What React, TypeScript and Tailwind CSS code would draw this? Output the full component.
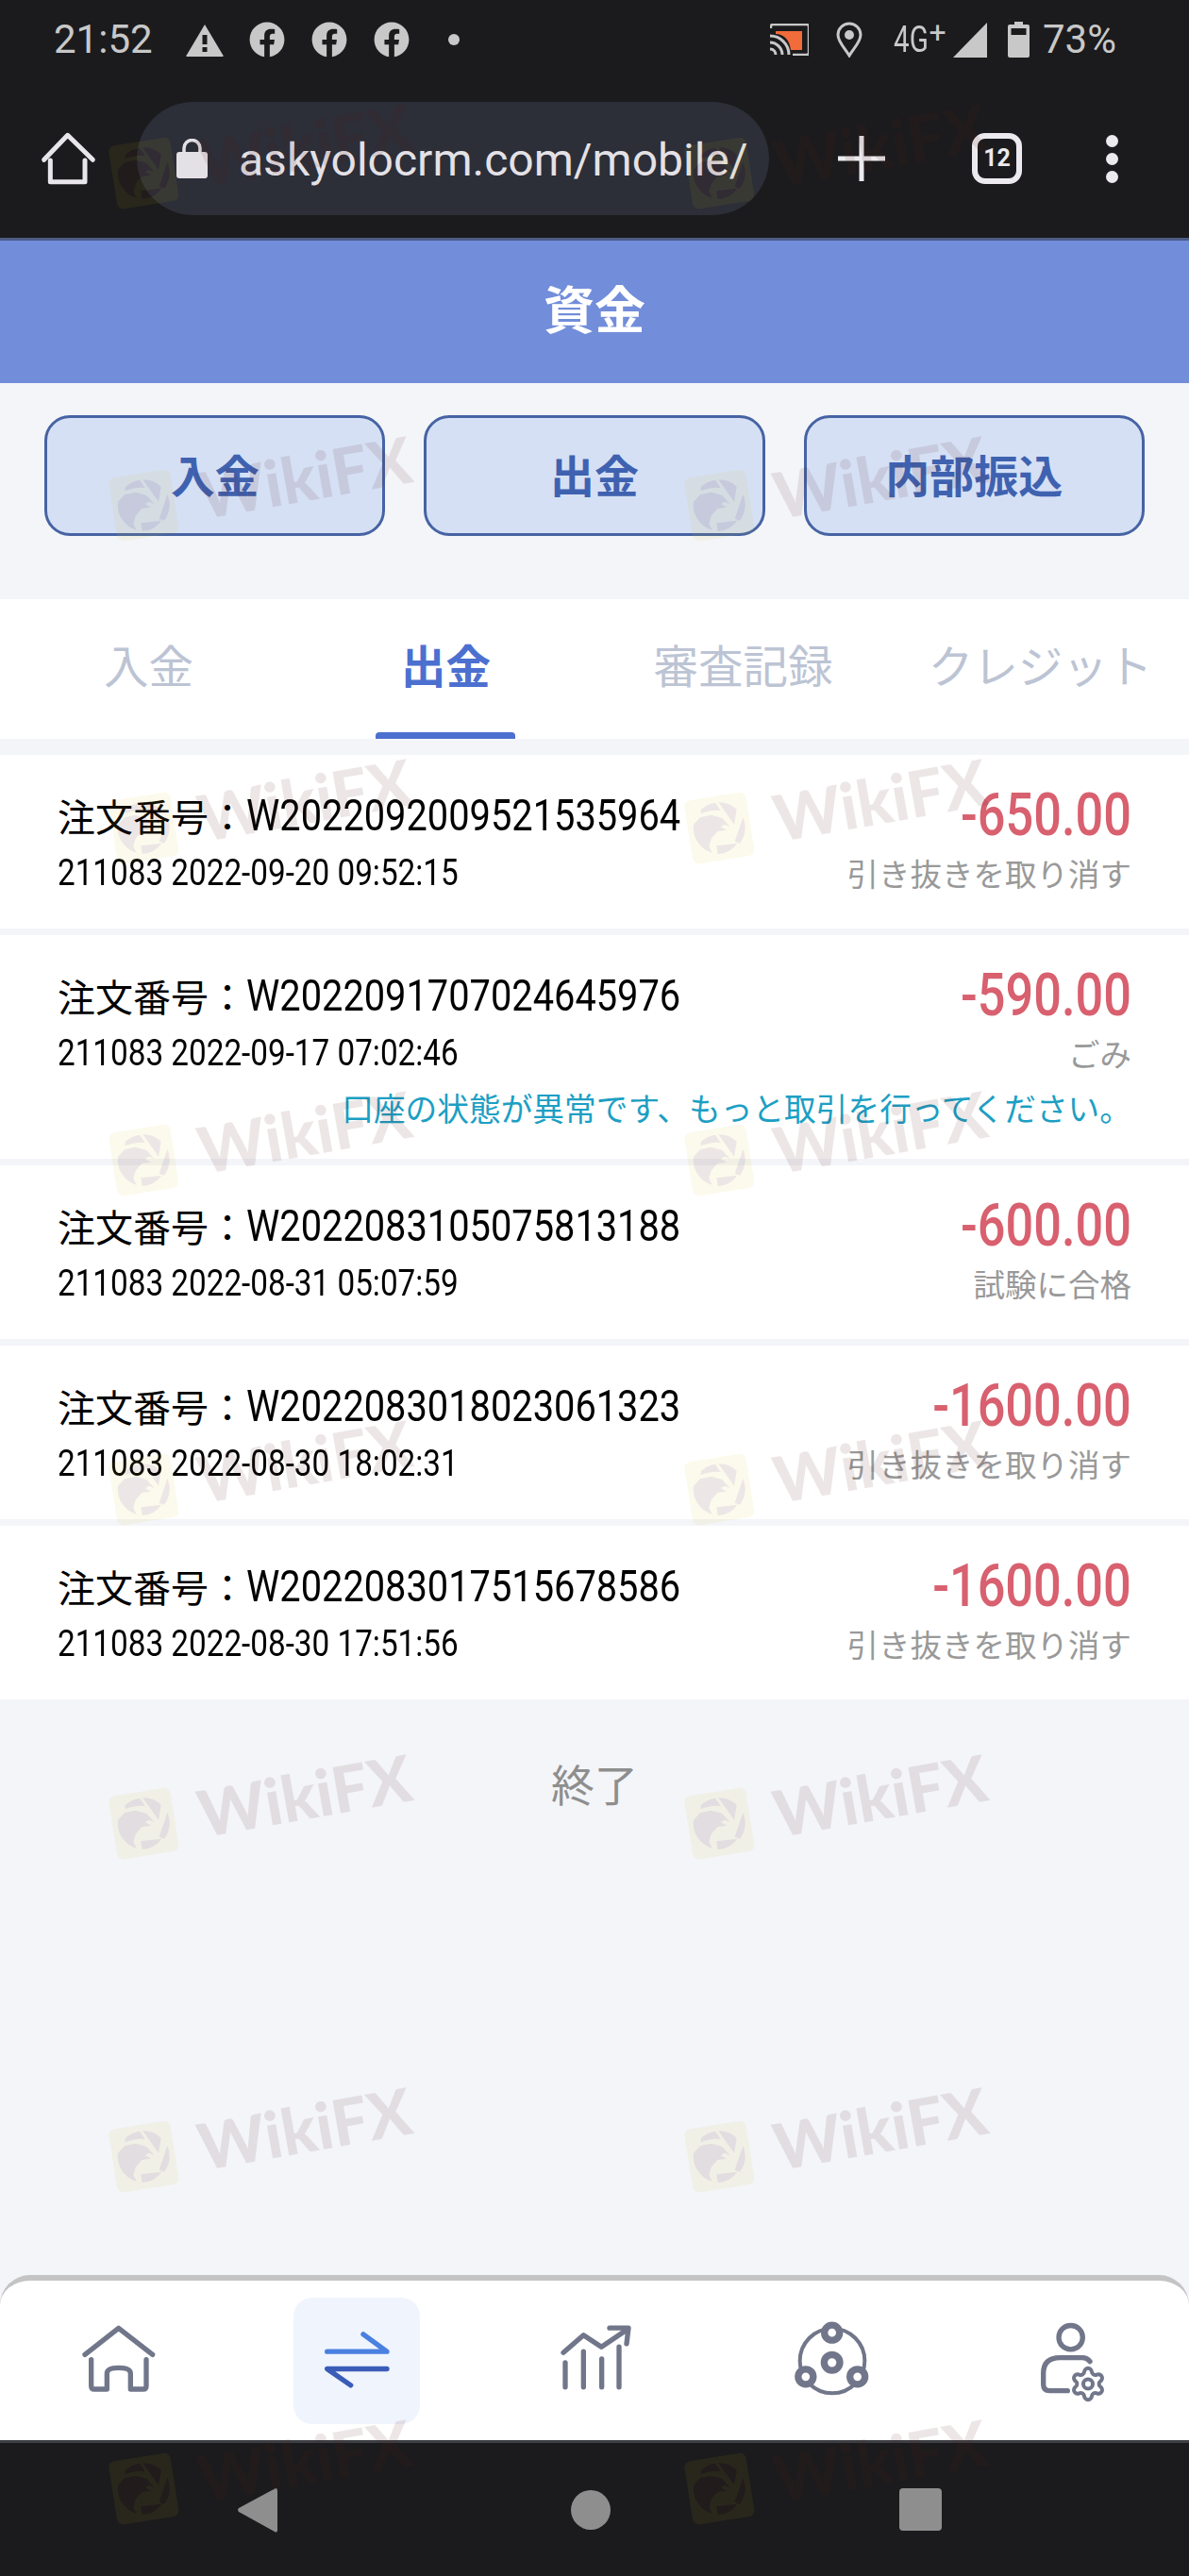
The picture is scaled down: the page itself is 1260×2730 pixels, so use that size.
import { useId } from "react";
import { FaFacebook } from "react-icons/fa";

const rowsTop = [143, 495, 837, 1189, 1538, 1892, 2245, 2597];
const colsLeft = [112, 722];

function LogoMark() {
  const id = useId();
  const shapes = (
    <>
      <path d="M39 110L60 88L95 80L130 90L155 118L138 110L125 118L145 128L115 132L95 155L88 180L98 200A82 82 0 0 1 39 110Z" />
      <path d="M62 64A82 82 0 0 1 108 41L125 66Q95 62 62 76Z" />
      <path d="M118 40A82 82 0 0 1 176 62L168 110Z" />
      <path d="M196 87A82 82 0 0 1 186 170L170 164Z" />
      <path d="M178 170A82 82 0 0 1 116 204L112 178Z" />
    </>
  );
  return (
    <svg width="81" height="81" viewBox="0 0 243 243" className="absolute left-0 top-0">
      <defs>
        <mask id={id}>
          <rect width="243" height="243" fill="black" />
          <rect x="22" y="20" width="198" height="204" rx="20" fill="white" transform="rotate(-9 120 122)" />
          <g fill="black">{shapes}</g>
        </mask>
      </defs>
      <rect width="243" height="243" fill="rgb(215,190,16)" fillOpacity="0.08" mask={`url(#${id})`} />
      <g fill="rgb(90,27,27)" fillOpacity="0.11">{shapes}</g>
    </svg>
  );
}

function Watermark({ top, left }: { top: number; left: number }) {
  return (
    <div className="absolute h-[81px] w-[330px]" style={{ top, left }}>
      <LogoMark />
      <div className="absolute left-[88px] top-[-29px] w-[245px] -rotate-[10deg] text-center font-['Lato',sans-serif] text-[68px] font-black leading-[78px] text-[rgba(90,27,27,0.11)]">
        WikiFX
      </div>
    </div>
  );
}

function Warning() {
  return (
    <svg width="40" height="35" viewBox="0 0 40 35">
      <path d="M20 1L39 33a1 1 0 0 1-1 2H2a1 1 0 0 1-1-2Z" fill="#c8c8c8" />
      <rect x="17.5" y="12" width="5" height="10" fill="#1b1b1d" />
      <rect x="17.5" y="25" width="5" height="5" fill="#1b1b1d" />
    </svg>
  );
}

function Cast() {
  return (
    <svg width="41" height="34" viewBox="0 0 41 34">
      <path d="M1 5V3a2 2 0 0 1 2-2h36a2 2 0 0 1 2 2v28a2 2 0 0 1-2 2H24" fill="none" stroke="#c8c8c8" strokeWidth="2.4" />
      <path d="M6 8H34V28H22C21 18 15 11 6 11Z" fill="#f26b3a" />
      <path d="M0 13C11 13 20 22 20 33M0 20C7 20 13 26 13 33M0 27C4 27 6 30 6 33" fill="none" stroke="#c8c8c8" strokeWidth="3" />
    </svg>
  );
}

function Pin() {
  return (
    <svg width="28" height="38" viewBox="0 0 28 38">
      <path d="M14 36C9 28 2 21 2 14a12 12 0 0 1 24 0C26 21 19 28 14 36Z" fill="none" stroke="#c8c8c8" strokeWidth="3" />
      <circle cx="14" cy="14" r="5" fill="#c8c8c8" />
    </svg>
  );
}

function Signal() {
  return (
    <svg width="36" height="37" viewBox="0 0 36 37">
      <path d="M36 0V37H0Z" fill="#c8c8c8" />
    </svg>
  );
}

function Battery() {
  return (
    <svg width="23" height="38" viewBox="0 0 23 38">
      <path d="M7 0H16V3H21a2 2 0 0 1 2 2V36a2 2 0 0 1-2 2H2a2 2 0 0 1-2-2V5a2 2 0 0 1 2-2H7Z" fill="#c8c8c8" />
      <rect x="3.5" y="7" width="16" height="7" fill="#1b1b1d" />
    </svg>
  );
}

function StatusBar() {
  return (
    <div className="flex h-[84px] items-center justify-between pl-[57px] pr-[77px] font-['Roboto',sans-serif] text-[#c8c8c8]">
      <div className="flex items-center">
        <span className="w-[105px] text-[42px] leading-none">21:52</span>
        <span className="ml-[35px] flex"><Warning /></span>
        <FaFacebook className="ml-[27px] text-[38px]" />
        <FaFacebook className="ml-[28px] text-[38px]" />
        <FaFacebook className="ml-[28px] text-[38px]" />
        <span className="ml-[41px] h-3 w-3 rounded-full bg-[#c8c8c8]" />
      </div>
      <div className="flex items-center">
        <Cast />
        <span className="ml-[29px] flex"><Pin /></span>
        <span className="ml-[33px] flex w-[55px] items-start">
          <span className="origin-left scale-x-[0.76] text-[39px] leading-none">4G</span>
          <span className="ml-[-11px] mt-[-5px] text-[32px] leading-none">+</span>
        </span>
        <span className="ml-[8px] flex"><Signal /></span>
        <span className="ml-[22px] flex"><Battery /></span>
        <span className="ml-[14px] text-[42px] leading-none">73%</span>
      </div>
    </div>
  );
}

function Toolbar() {
  return (
    <div className="flex h-[168px] items-center pl-[42px]">
      <svg width="60" height="60" viewBox="0 0 180 180" className="shrink-0">
        <path d="M14 94L89 16L169 94M34 96V164H144V96" fill="none" stroke="#e8e6ea" strokeWidth="15" strokeLinecap="round" strokeLinejoin="round" />
      </svg>
      <div className="ml-[43px] flex h-[120px] w-[670px] shrink-0 items-center rounded-[60px] bg-[#2c2e38] pl-[42px]">
        <svg width="33" height="42" viewBox="0 0 33 42">
          <path d="M8 16V10a8.5 8.5 0 0 1 17 0V16" fill="none" stroke="#e4e1e6" strokeWidth="3.5" />
          <rect x="0" y="14" width="33" height="28" rx="3" fill="#e4e1e6" />
        </svg>
        <span className="ml-[33px] pt-[3px] font-['Roboto',sans-serif] text-[48px] leading-none text-[#e4e1e6]">askyolocrm.com/mobile/</span>
      </div>
      <svg width="50" height="48" viewBox="0 0 50 48" className="ml-[73px] shrink-0">
        <path d="M25 0V48M0 24H50" stroke="#eceaee" strokeWidth="5" />
      </svg>
      <div className="ml-[92px] flex h-[54px] w-[53px] shrink-0 items-center justify-center rounded-[14px] border-[6px] border-[#eceaee] font-['Roboto',sans-serif] text-[25px] font-bold text-[#eceaee]">12</div>
      <div className="ml-[89px] flex flex-col gap-[6px]">
        <span className="h-[13px] w-[13px] rounded-full bg-[#eceaee]" />
        <span className="h-[13px] w-[13px] rounded-full bg-[#eceaee]" />
        <span className="h-[13px] w-[13px] rounded-full bg-[#eceaee]" />
      </div>
    </div>
  );
}

type Rec = { no: string; time: string; amount: string; status: string; note?: string };
const records: Rec[] = [
  { no: "W2022092009521535964", time: "211083 2022-09-20 09:52:15", amount: "-650.00", status: "引き抜きを取り消す" },
  { no: "W2022091707024645976", time: "211083 2022-09-17 07:02:46", amount: "-590.00", status: "ごみ", note: "口座の状態が異常です、もっと取引を行ってください。" },
  { no: "W2022083105075813188", time: "211083 2022-08-31 05:07:59", amount: "-600.00", status: "試験に合格" },
  { no: "W2022083018023061323", time: "211083 2022-08-30 18:02:31", amount: "-1600.00", status: "引き抜きを取り消す" },
  { no: "W2022083017515678586", time: "211083 2022-08-30 17:51:56", amount: "-1600.00", status: "引き抜きを取り消す" },
];

function Row({ r }: { r: Rec }) {
  return (
    <div className={r.note ? "h-[237px] bg-white px-[61px] pt-[40px]" : "h-[184px] bg-white px-[61px] pt-[40px]"}>
      <div className="flex h-[48px] items-center justify-between whitespace-nowrap">
        <div className="flex items-center text-[40px] leading-[48px] text-black">
          <span className="w-[200px]">{"注文番号\uFF1A"}</span>
          <span className="inline-block w-[458px] origin-left scale-x-[0.865] font-['Roboto',sans-serif] text-[46px]">{r.no}</span>
        </div>
        <span className="inline-block origin-right scale-x-[0.83] font-['Roboto',sans-serif] text-[63px] font-medium leading-[48px] text-[#d8606f]">{r.amount}</span>
      </div>
      <div className="mt-[13px] flex h-[48px] items-center justify-between whitespace-nowrap">
        <span className="inline-block w-[425px] origin-left scale-x-[0.875] font-['Roboto',sans-serif] text-[38px] leading-[48px] text-black">{r.time}</span>
        <span className="text-[33.5px] leading-[48px] text-[#999999]">{r.status}</span>
      </div>
      {r.note && (
        <div className="mt-[10px] whitespace-nowrap text-right text-[33.7px] leading-[48px] text-[#1c9fc4]">{r.note}</div>
      )}
    </div>
  );
}

function NavIcons() {
  const g = "#71768a";
  return (
    <div className="grid h-[169px] grid-cols-5 items-center">
      <div className="flex justify-center">
        <svg width="100" height="100" viewBox="0 0 300 300">
          <path d="M42 130L149 46L257 130M62 146V230Q62 240 72 240H112V190Q112 172 149 172Q187 172 187 190V240H227Q237 240 237 230V146" fill="none" stroke={g} strokeWidth="16" strokeLinecap="round" strokeLinejoin="round" />
        </svg>
      </div>
      <div className="flex justify-center">
        <div className="flex h-[134px] w-[134px] items-center justify-center rounded-[20px] bg-[#f0f4fd]">
          <svg width="100" height="100" viewBox="0 0 300 300">
            <path d="M56 120.5H246L171 65.5" fill="none" stroke="#4a80e0" strokeWidth="16" strokeLinecap="round" strokeLinejoin="round" />
            <path d="M246 175.5H56L131 227.5" fill="none" stroke="#3a5cb8" strokeWidth="16" strokeLinecap="round" strokeLinejoin="round" />
          </svg>
        </div>
      </div>
      <div className="flex justify-center">
        <svg width="100" height="100" viewBox="0 0 300 300">
          <path d="M51 123.5L115 68.5L172 105.5L254 50.5M198 45.5H258L252 95.5" fill="none" stroke={g} strokeWidth="16" strokeLinecap="round" strokeLinejoin="round" />
          <path d="M57 155.5V233.5M115 120.5V233.5M173 143.5V233.5M228 105.5V233.5" fill="none" stroke={g} strokeWidth="16" strokeLinecap="round" />
        </svg>
      </div>
      <div className="flex justify-center">
        <svg width="100" height="100" viewBox="0 0 300 300">
          <circle cx="150" cy="150" r="103" fill="none" stroke={g} strokeWidth="12" />
          <circle cx="149" cy="60.5" r="24" fill="white" stroke={g} strokeWidth="22" />
          <circle cx="65.5" cy="200.5" r="24" fill="white" stroke={g} strokeWidth="22" />
          <circle cx="230" cy="200.5" r="24" fill="white" stroke={g} strokeWidth="22" />
          <circle cx="149" cy="155.5" r="25" fill="white" stroke={g} strokeWidth="22" />
        </svg>
      </div>
      <div className="flex justify-center pl-[6px]">
        <svg width="100" height="100" viewBox="0 0 300 300">
          <ellipse cx="143" cy="75.5" rx="38" ry="38" fill="none" stroke={g} strokeWidth="16" />
          <path d="M204 152Q195 140 180 140H109Q56 140 56 190V225Q56 245 76 245H133" fill="none" stroke={g} strokeWidth="16" strokeLinecap="round" />
          <g transform="translate(138 163.5) scale(5)" fill="white" stroke={g} strokeWidth="2.4">
            <path d="M9.671 4.136a2.34 2.34 0 0 1 4.659 0 2.34 2.34 0 0 0 3.319 1.915 2.34 2.34 0 0 1 2.33 4.033 2.34 2.34 0 0 0 0 3.831 2.34 2.34 0 0 1-2.33 4.033 2.34 2.34 0 0 0-3.319 1.915 2.34 2.34 0 0 1-4.659 0 2.34 2.34 0 0 0-3.32-1.915 2.34 2.34 0 0 1-2.33-4.033 2.34 2.34 0 0 0 0-3.831A2.34 2.34 0 0 1 6.35 6.051a2.34 2.34 0 0 0 3.32-1.915" />
            <circle cx="12" cy="12" r="3" />
          </g>
        </svg>
      </div>
    </div>
  );
}

export default function App() {
  return (
    <div className="relative flex h-[2730px] w-[1260px] flex-col overflow-hidden bg-[#f3f5f9] font-['Noto_Sans_CJK_JP','Noto_Sans',sans-serif]">
      <div className="h-[252px] bg-[#1b1b1d]">
        <StatusBar />
        <Toolbar />
      </div>
      <div className="h-[3px] bg-[#4d5b85]" />
      <div className="flex h-[151px] items-center justify-center bg-[#728dda] pb-[10px] text-[54px] font-bold text-white">資金</div>

      <div className="grid grid-cols-3 gap-[41px] px-[47px] pt-[34px]">
        {["入金", "出金", "内部振込"].map((t) => (
          <div key={t} className="flex h-[128px] items-center justify-center rounded-[27px] border-[3px] border-[#4663a3] bg-[#d5e0f5] pb-[4px] text-[47px] font-bold text-[#3f62b0]">{t}</div>
        ))}
      </div>

      <div className="mt-[67px] grid h-[148px] grid-cols-4 bg-white">
        {["入金", "出金", "審査記録", "クレジット"].map((t, i) => (
          <div key={t} className={i === 1 ? "relative flex items-center justify-center whitespace-nowrap pb-[10px] text-[47.5px] font-bold text-[#4c70cf]" : "relative flex items-center justify-center whitespace-nowrap pb-[10px] text-[47.5px] text-[#bcc4d4]"}>
            {t}
            {i === 1 && <span className="absolute bottom-0 left-[83px] h-[7px] w-[148px] rounded-t-[4px] bg-[#4c70cf]" />}
          </div>
        ))}
      </div>

      <div className="mt-[17px] flex flex-col gap-[7px]">
        {records.map((r) => <Row key={r.no} r={r} />)}
      </div>

      <div className="flex h-[176px] items-center justify-center text-[46px] text-[#8e8e8e]">終了</div>

      <div className="flex-1" />

      <div className="rounded-t-[32px] border-t-[6px] border-[#c4c4c4] bg-white">
        <NavIcons />
      </div>
      <div className="h-[3px] bg-[#3d3f44]" />
      <div className="flex h-[141px] items-center bg-[#1b1b1d] pl-[252px]">
        <svg width="42" height="48" viewBox="0 0 42 48">
          <path d="M40 1a2 2 0 0 1 2 2V46a2 2 0 0 1-3 1L1 26a3 3 0 0 1 0-4Z" fill="#8e8e8e" />
        </svg>
        <span className="ml-[311px] h-[42px] w-[42px] rounded-full bg-[#8e8e8e]" />
        <span className="ml-[306px] h-[45px] w-[45px] rounded-[4px] bg-[#8e8e8e]" />
      </div>

      <div className="pointer-events-none absolute inset-0 overflow-hidden">
        {rowsTop.map((t) => colsLeft.map((l) => <Watermark key={`${t}-${l}`} top={t} left={l} />))}
      </div>
    </div>
  );
}
